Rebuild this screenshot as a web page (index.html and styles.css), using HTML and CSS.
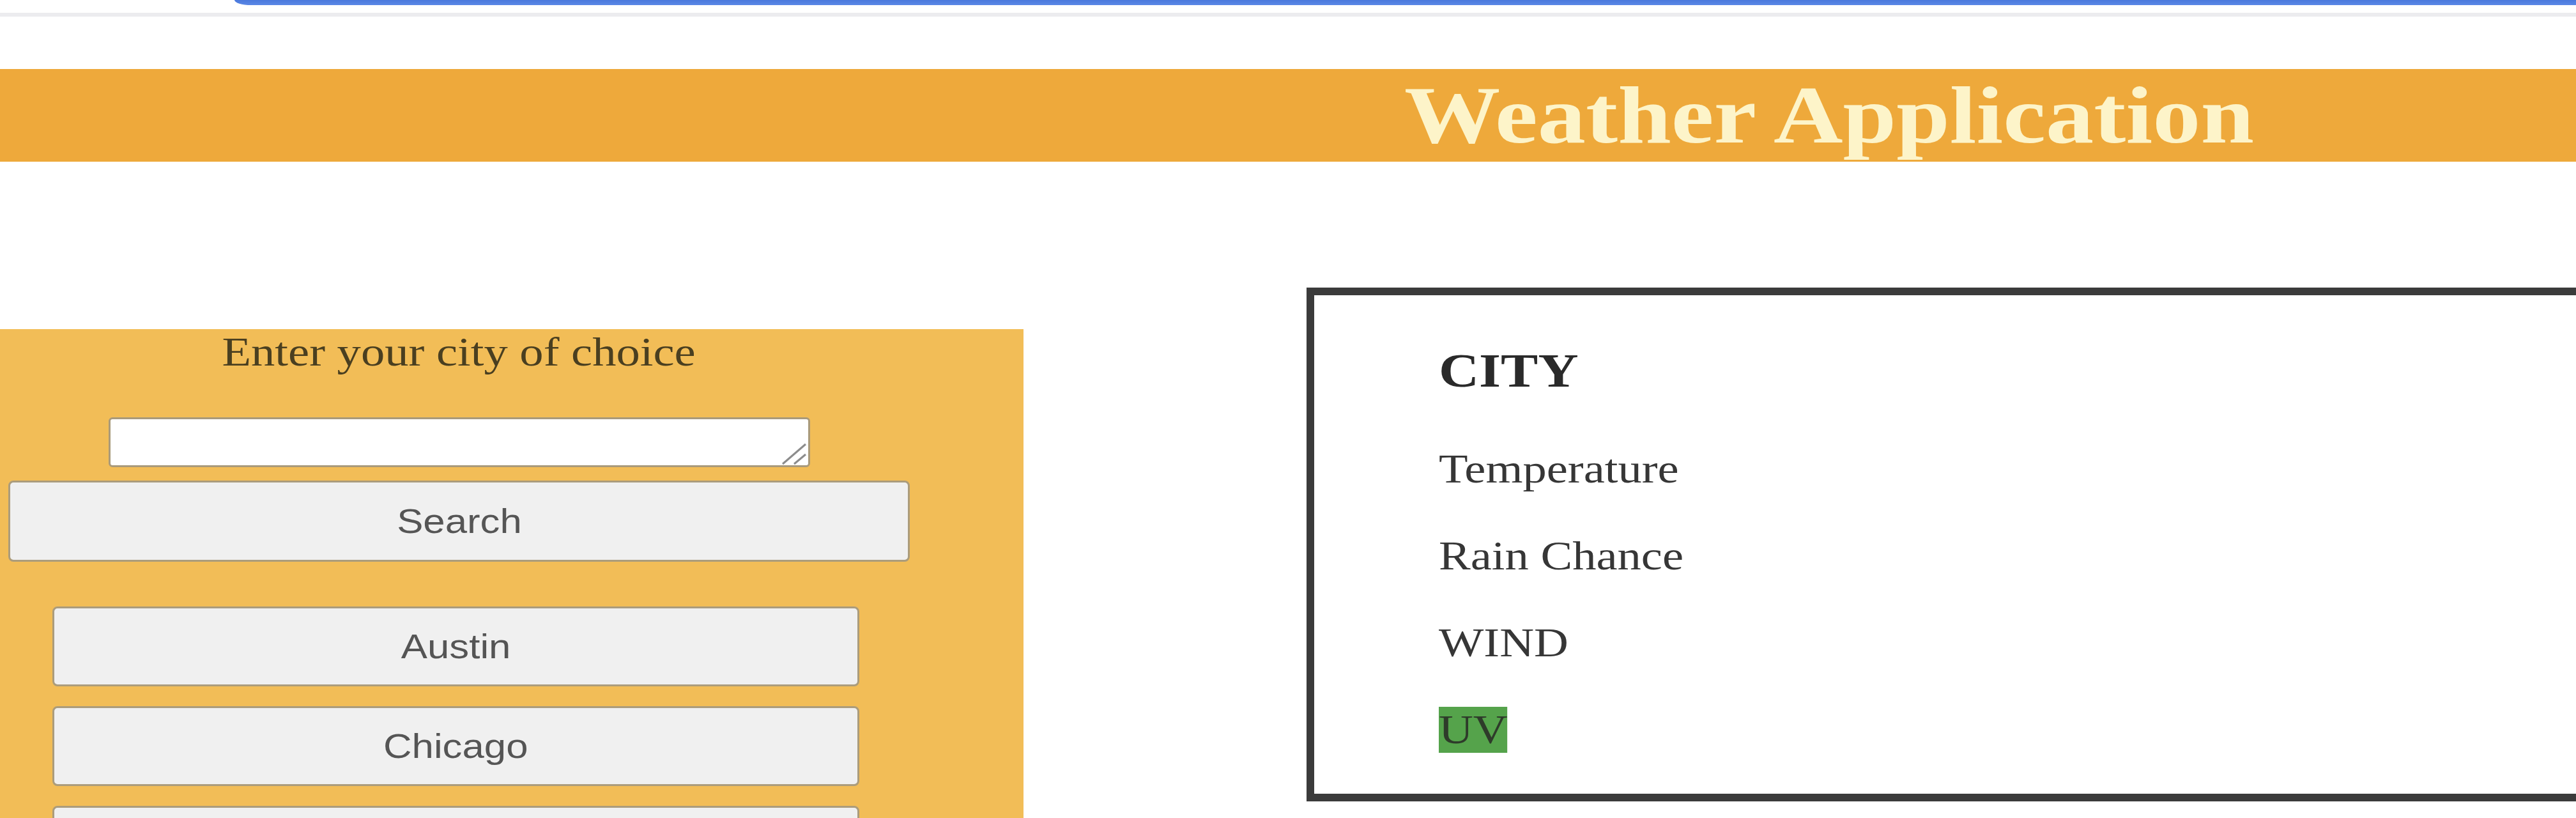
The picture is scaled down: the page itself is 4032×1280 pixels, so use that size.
FILE: index.html
```html
<!DOCTYPE html>
<html lang="en">
<head>
<meta charset="utf-8">
<title>Weather Application</title>
<link rel="stylesheet" href="styles.css">
</head>
<body>
<div class="chrome"><div class="chrome-bar"></div></div>
<header class="app-header">
  <h1 class="app-title"><span class="stretch title-stretch">Weather Application</span></h1>
</header>
<main class="content">
  <section class="search-panel">
    <div class="search-inner">
      <p class="prompt"><span class="stretch stretch-c">Enter your city of choice</span></p>
      <div class="field">
        <textarea class="city-input" aria-label="City"></textarea>
        <svg class="grip" width="40" height="36" viewBox="0 0 40 36" aria-hidden="true">
          <line x1="2" y1="34" x2="38" y2="3" />
          <line x1="20" y1="34" x2="38" y2="19" />
        </svg>
      </div>
      <button class="btn btn-search"><span class="stretch stretch-c">Search</span></button>
      <div class="city-list">
        <button class="btn btn-city"><span class="stretch stretch-c">Austin</span></button>
        <button class="btn btn-city"><span class="stretch stretch-c">Chicago</span></button>
        <button class="btn btn-city" aria-label="More cities"></button>
      </div>
    </div>
  </section>
  <section class="weather-card">
    <h3 class="city-name"><span class="stretch">CITY</span></h3>
    <p class="stat"><span class="stretch">Temperature</span></p>
    <p class="stat"><span class="stretch">Rain Chance</span></p>
    <p class="stat"><span class="stretch">WIND</span></p>
    <p class="stat"><span class="stretch uv">UV</span></p>
  </section>
</main>
</body>
</html>
```
FILE: styles.css
```css
html, body {
  margin: 0;
  padding: 0;
  background: #ffffff;
}
body {
  width: 4032px;
  height: 1280px;
  overflow: hidden;
  font-family: "Liberation Serif", "Times New Roman", serif;
  font-size: 64px;
  color: #363636;
}

.stretch {
  display: inline-block;
  transform: scaleX(1.165);
  transform-origin: left center;
}
.stretch-c {
  transform-origin: center center;
}
.title-stretch {
  transform: scaleX(1.175);
}

/* browser chrome remnants */
.chrome {
  height: 20px;
  border-bottom: 6px solid #ececef;
}
.chrome-bar {
  margin-left: 367px;
  height: 8px;
  background: linear-gradient(#4a78dc, #5b88e6);
  border-bottom-left-radius: 26px 8px;
}

/* header */
.app-header {
  margin-top: 82px;
  height: 145px;
  background: #eea93b;
  padding-left: 2198px;
}
.app-title {
  margin: 0;
  font-size: 128px;
  line-height: 145px;
  font-weight: 700;
  color: #fdf4c9;
  white-space: nowrap;
}

/* main area */
.content {
  display: flex;
  align-items: flex-start;
  margin-top: 197px;
}

.search-panel {
  width: 1602px;
  height: 800px;
  flex-shrink: 0;
  margin-top: 65px;
  background: #f2bd57;
}
.search-inner {
  width: 1437px;
  display: flex;
  flex-direction: column;
  align-items: center;
}
.prompt {
  margin: 0 0 66px;
  line-height: 72px;
  color: #4a3f20;
  white-space: nowrap;
}
.field {
  position: relative;
  width: 1098px;
  height: 78px;
}
.city-input {
  display: block;
  width: 100%;
  height: 100%;
  box-sizing: border-box;
  margin: 0;
  border: 3px solid #a99a7b;
  border-radius: 6px;
  background: #ffffff;
  resize: none;
}
.grip {
  position: absolute;
  right: 5px;
  bottom: 3px;
  stroke: #8c8c8c;
  stroke-width: 3;
}

.btn {
  box-sizing: border-box;
  margin: 0;
  background: #f0f0f0;
  border: 3px solid #ab9c7c;
  border-radius: 8px;
  font-family: "Liberation Sans", Arial, sans-serif;
  font-size: 53px;
  color: #555555;
  padding: 0;
}
.btn-search {
  margin-top: 21px;
  width: 1411px;
  height: 127px;
}
.city-list {
  align-self: stretch;
  margin-top: 70px;
  padding-left: 82px;
  display: flex;
  flex-direction: column;
  gap: 31px;
}
.btn-city {
  width: 1263px;
  height: 125px;
  flex-shrink: 0;
}

/* weather card */
.weather-card {
  flex-shrink: 0;
  box-sizing: border-box;
  width: 2400px;
  margin-left: 443px;
  border: 12px solid #3b3b3b;
  padding: 0 195px;
}
.city-name {
  margin: 75px 0;
  font-size: 75px;
  font-weight: 700;
  color: #2a2a2a;
}
.stat {
  margin: 64px 0;
  line-height: 72px;
  color: #363636;
}
.uv {
  background: #55a34b;
  color: #2e3b2a;
}
```
